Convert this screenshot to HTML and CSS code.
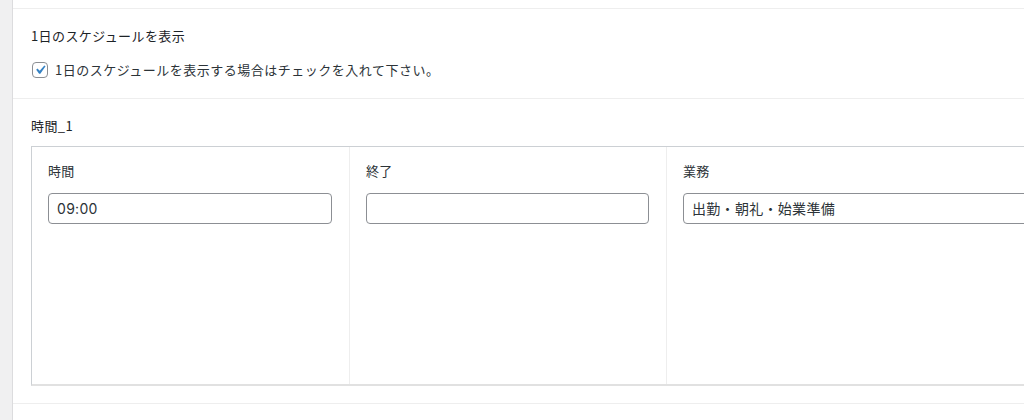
FILE: index.html
```html
<!DOCTYPE html>
<html lang="ja">
<head>
<meta charset="utf-8">
<title>Schedule</title>
<link rel="stylesheet" href="styles.css">
</head>
<body>
<div class="page">
  <div class="gutter"></div>
  <div class="panel">
    <div class="top"></div>
    <div class="field field-check">
      <div class="label">1日のスケジュールを表示</div>
      <label class="check-row">
        <span class="checkbox">
          <svg viewBox="0 0 20 20" width="16" height="16"><path d="M14.83 4.89l1.34.94-5.81 8.38H9.02L5.78 9.67l1.34-1.25 2.57 2.4z" fill="#3582c4"/></svg>
        </span>
        <span class="check-text">1日のスケジュールを表示する場合はチェックを入れて下さい。</span>
      </label>
    </div>
    <div class="field field-group">
      <div class="label">時間_1</div>
      <div class="group">
        <div class="col col1">
          <div class="sub-label">時間</div>
          <div class="input">09:00</div>
        </div>
        <div class="col col2">
          <div class="sub-label">終了</div>
          <div class="input"></div>
        </div>
        <div class="col col3">
          <div class="sub-label">業務</div>
          <div class="input">出勤・朝礼・始業準備</div>
        </div>
      </div>
    </div>
  </div>
</div>
</body>
</html>
```

FILE: styles.css
```css
* { box-sizing: border-box; }
html, body { margin: 0; padding: 0; }
body {
  background: #f0f0f1;
  font-family: "Noto Sans CJK JP", "Noto Sans", sans-serif;
  color: #1d2327;
  font-size: 13px;
  width: 1024px;
  height: 420px;
  overflow: hidden;
}
.page { display: flex; height: 420px; }
.gutter { width: 12px; flex: none; background: #f0f0f1; }
.panel {
  flex: 1;
  min-width: 0;
  background: #fff;
  border-left: 1px solid #dcdcde;
  overflow: hidden;
}
.top { height: 9px; border-bottom: 1px solid #eeeeee; }
.field { padding: 18px 0 0 18px; border-bottom: 1px solid #eeeeee; }
.label { font-size: 13px; line-height: 18px; font-weight: 400; color: #1d2327; letter-spacing: 0.4px; }
.field-check { height: 90px; }
.check-row { display: flex; align-items: center; gap: 7px; margin-top: 16px; padding-left: 1px; }
.checkbox {
  width: 16px; height: 16px;
  border: 1px solid #8c8f94;
  border-radius: 4px;
  background: #fff;
  display: flex; align-items: center; justify-content: center;
}
.checkbox svg { width: 18px; height: 18px; flex: none; }
.check-text { font-size: 13px; line-height: 18px; color: #2c3338; letter-spacing: 0.5px; }
.field-group { height: 305px; padding-top: 18px; }
.group {
  margin-top: 11px;
  display: flex;
  width: 1100px;
  height: 240px;
  border: 1px solid #ccd0d4;
  border-right: none;
  border-bottom: 2px solid #e1e1e1;
}
.col { padding: 15px 17px 0 16px; border-right: 1px solid #eeeeee; }
.col1 { width: 318px; }
.col2 { width: 317px; }
.col3 { width: 420px; border-right: none; }
.sub-label { font-size: 13px; line-height: 18px; color: #2c3338; letter-spacing: 0.3px; }
.input {
  margin-top: 13px;
  height: 31px;
  border: 1px solid #8c8f94;
  border-radius: 4px;
  padding: 0 8px;
  font-family: "Inter", "Noto Sans CJK JP", sans-serif;
  font-size: 14px;
  line-height: 29px;
  letter-spacing: 0.3px;
  color: #2c3338;
  background: #fff;
}
```
